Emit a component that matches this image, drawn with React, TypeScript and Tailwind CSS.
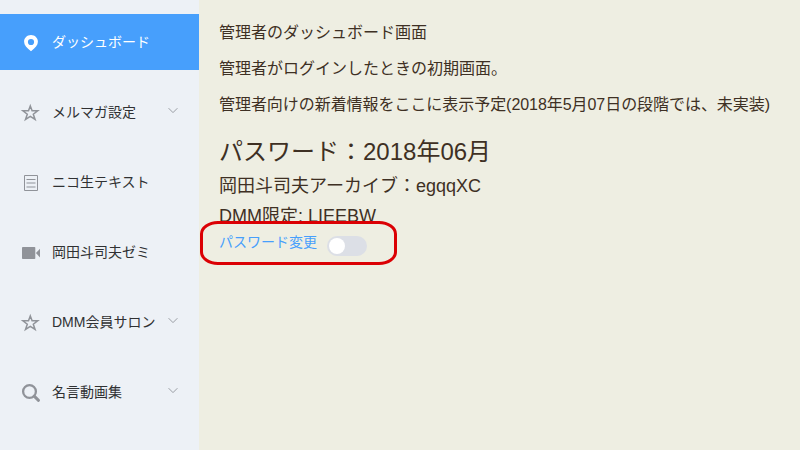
import type { ReactNode } from "react";

function PinIcon() {
  return (
    <svg width="18" height="18" viewBox="0 0 18 18" fill="currentColor">
      <path
        fillRule="evenodd"
        d="M9 1c-3.900 0-6.900 2.900-6.900 6.700 0 3.200 2.600 6.300 6.900 9.500 4.300-3.200 6.900-6.300 6.900-9.500C15.900 3.900 12.900 1 9 1zm0 3.900a3.100 3.100 0 1 1 0 6.200 3.100 3.100 0 0 1 0-6.200z"
      />
    </svg>
  );
}

function StarIcon() {
  return (
    <svg width="18" height="18" viewBox="0 0 18 18" fill="none" stroke="currentColor" strokeWidth="1.500" className="overflow-visible">
      <path d="M8.300 2 10.100 6.800h5.600l-4.400 3.400 1.800 5.300-4.800-3.100-4.800 3.100 1.800-5.300L0.900 6.800h5.600z" />
    </svg>
  );
}

function DocumentIcon() {
  return (
    <svg width="18" height="18" viewBox="0 0 18 18" fill="none" stroke="currentColor">
      <path d="M2.500 1.500h13v15h-13z" />
      <path d="M4.500 5.500h9M4.500 9h9M4.500 13h9" strokeWidth="1.100" />
    </svg>
  );
}

function VideoIcon() {
  return (
    <svg width="18" height="18" viewBox="0 0 18 18" fill="currentColor">
      <rect x="0" y="3" width="13.300" height="12" rx="0.800" />
      <path d="M13.900 9 18 4.800v8.600z" />
    </svg>
  );
}

function SearchIcon() {
  return (
    <svg width="18" height="18" viewBox="0 0 18 18" fill="none" stroke="currentColor" className="overflow-visible">
      <circle cx="7.500" cy="7.500" r="6.400" strokeWidth="2.300" />
      <path d="m12.200 12.200 4.300 4.100" strokeWidth="3" strokeLinecap="round" />
    </svg>
  );
}

function Chevron() {
  return (
    <svg width="10" height="6" viewBox="0 0 10 6" fill="none" stroke="#909399" strokeWidth="0.900" className="mr-[21px] -mt-0.5 ml-auto">
      <path d="M0.600 0.200 5 4.600 9.400 0.200" />
    </svg>
  );
}

type Item = { label: string; icon: ReactNode; expandable?: boolean; active?: boolean };

const items: Item[] = [
  { label: "ダッシュボード", icon: <PinIcon />, active: true },
  { label: "メルマガ設定", icon: <StarIcon />, expandable: true },
  { label: "ニコ生テキスト", icon: <DocumentIcon /> },
  { label: "岡田斗司夫ゼミ", icon: <VideoIcon /> },
  { label: "DMM会員サロン", icon: <StarIcon />, expandable: true },
  { label: "名言動画集", icon: <SearchIcon />, expandable: true },
];

export default function App() {
  return (
    <div className="flex h-[450px] w-[800px] overflow-hidden bg-[#eeeee2] font-['Liberation_Sans','Noto_Sans_CJK_JP',sans-serif]">
      <nav className="flex w-[199px] shrink-0 flex-col gap-3.5 bg-[#edf1f6] pt-3.5">
        {items.map((item) => (
          <a
            key={item.label}
            className={
              item.active
                ? "flex h-14 items-center bg-[#479ffc] pl-[22px] text-sm text-white"
                : "flex h-14 items-center pl-[22px] text-sm text-[#303133]"
            }
          >
            <span className={item.active ? "mt-0.5 w-[30px]" : "mt-0.5 w-[30px] text-[#909399]"}>{item.icon}</span>
            <span className="whitespace-nowrap">{item.label}</span>
            {item.expandable && <Chevron />}
          </a>
        ))}
      </nav>
      <main className="flex-1 whitespace-nowrap pl-5 pt-[23px] text-[#3e3024]">
        <div className="flex flex-col gap-4 text-base leading-5">
          <p>管理者のダッシュボード画面</p>
          <p>管理者がログインしたときの初期画面。</p>
          <p className="tracking-[-0.05px]">管理者向けの新着情報をここに表示予定(2018年5月07日の段階では、未実装)</p>
        </div>
        <h2 className="mt-[19px] text-2xl leading-9">パスワード：2018年06月</h2>
        <p className="mt-px text-lg leading-[30px]">岡田斗司夫アーカイブ：egqqXC</p>
        <p className="text-lg leading-[30px]">DMM限定: LIEEBW</p>
        <div className="relative flex h-[30px] items-center">
          <span className="-mt-2 text-sm leading-5 text-[#479ffc]">パスワード変更</span>
          <span className="ml-2.5 flex h-5 w-10 items-center rounded-full bg-[#dcdfe6] px-0.5">
            <span className="size-4 rounded-full bg-white" />
          </span>
          <span className="absolute -left-[19px] -top-[10px] h-[44px] w-[197px] rounded-[18px/13px] border-[3px] border-[#db0004]" />
        </div>
      </main>
    </div>
  );
}
